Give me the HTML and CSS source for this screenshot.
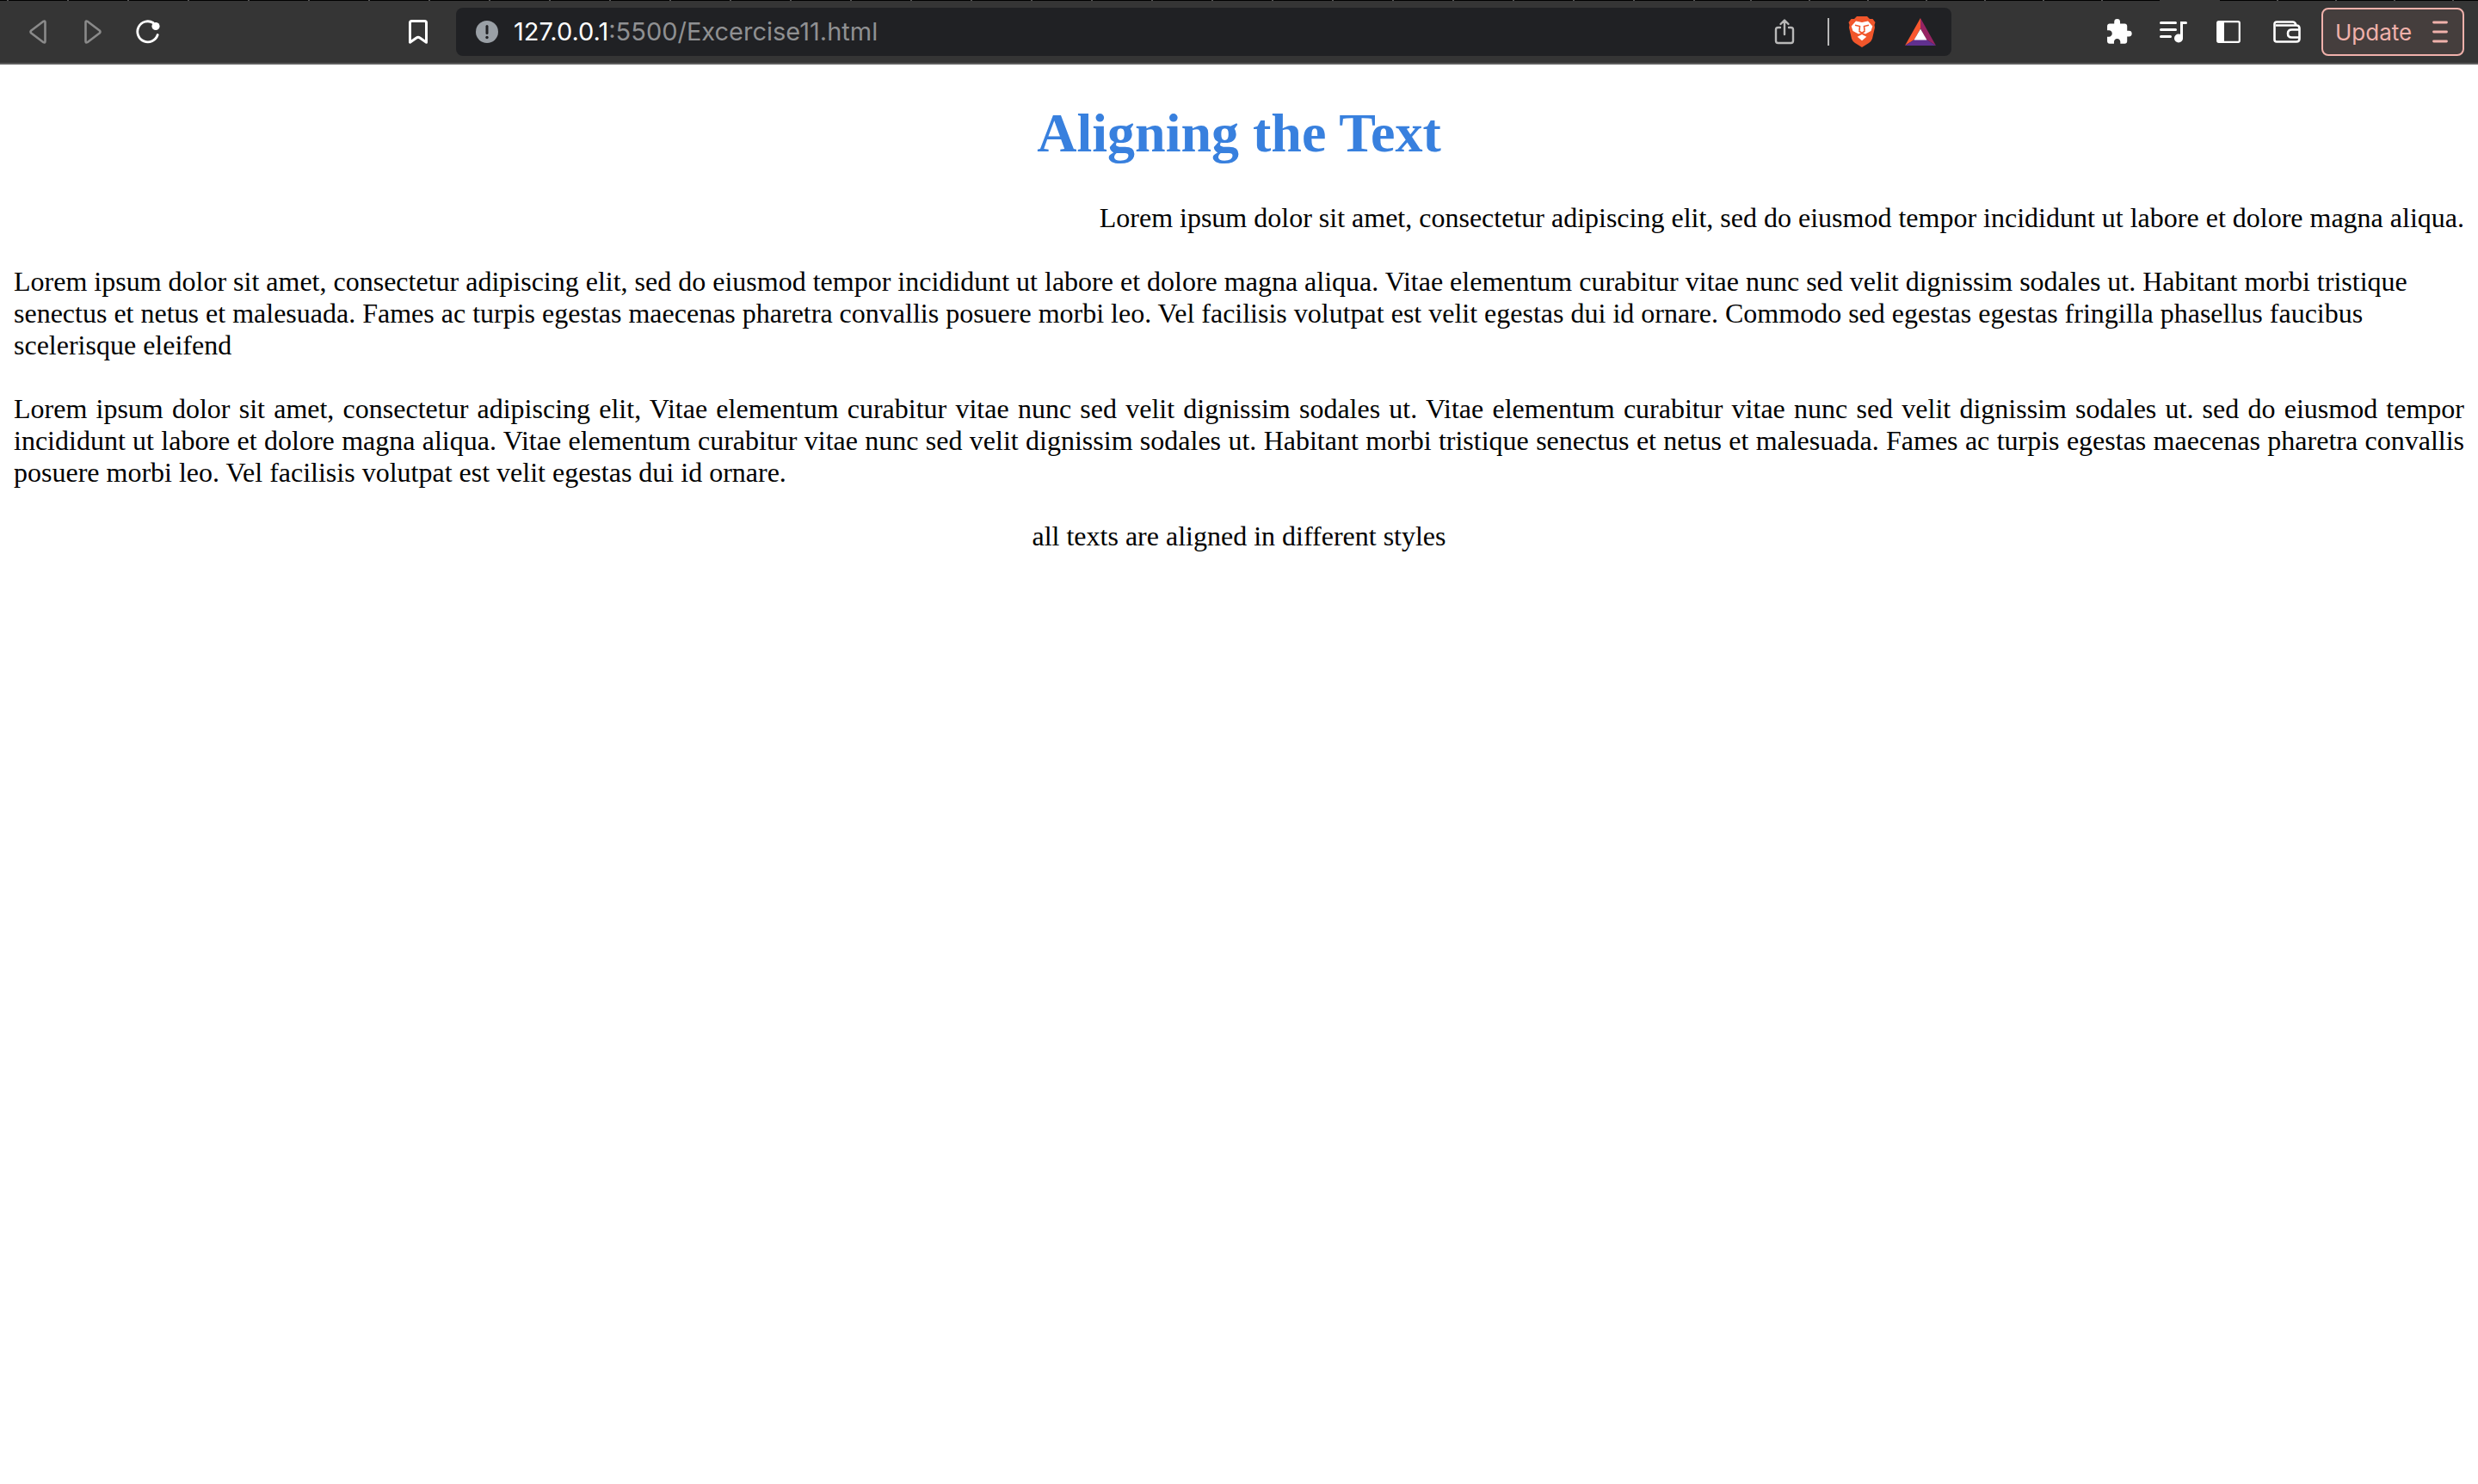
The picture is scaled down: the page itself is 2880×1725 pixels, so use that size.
FILE: index.html
```html
<!DOCTYPE html>
<html lang="en">
<head>
<meta charset="utf-8">
<title>Aligning the Text</title>
<link rel="stylesheet" href="styles.css">
</head>
<body>
<div class="tabstrip"><span class="tabs wide"></span><span class="tabs near"></span><span class="active"></span><span class="tabs rest"></span></div>
<header class="toolbar">
  <nav class="nav" aria-label="Navigation">
    <button class="icon-btn dim" aria-label="Back"><svg width="28" height="28" viewBox="-4 0 28 28"><path d="M16.500 1.800Q18.500.8 18.500 3V25Q18.500 27.200 16.500 26.200L2.300 15.500Q.8 14 2.300 12.500Z" fill="none" stroke="currentColor" stroke-width="2.600" stroke-linejoin="round"/></svg></button>
    <button class="icon-btn dim" aria-label="Forward"><svg width="28" height="28" viewBox="-4 0 28 28"><path d="M3.500 1.800Q1.500.8 1.500 3V25Q1.500 27.200 3.500 26.200L17.700 15.500Q19.200 14 17.700 12.500Z" fill="none" stroke="currentColor" stroke-width="2.600" stroke-linejoin="round"/></svg></button>
    <button class="icon-btn" aria-label="Reload"><svg width="28" height="28" viewBox="0 0 28 28"><path d="M20 3.500A12 12 0 1 0 25.200 17.500" fill="none" stroke="currentColor" stroke-width="2.800" stroke-linecap="round"/><circle cx="23" cy="7.500" r="4.600" fill="currentColor"/></svg></button>
  </nav>
  <button class="icon-btn bookmark" aria-label="Bookmark"><svg width="22" height="28" viewBox="0 0 22 28"><path d="M3.500 1.500H18.500Q20.500 1.500 20.500 3.500V26.200L13 21Q11 19.500 9 21L1.500 26.200V3.500Q1.500 1.500 3.500 1.500Z" fill="none" stroke="currentColor" stroke-width="3" stroke-linejoin="round"/></svg></button>
  <div class="address">
    <svg class="info" width="26" height="28" viewBox="0 0 26 28"><circle cx="13" cy="14" r="13" fill="#9aa0a6"/><path d="M13 7.500V15.500" stroke="#202124" stroke-width="3" stroke-linecap="round"/><circle cx="13" cy="20.500" r="1.700" fill="#202124"/></svg>
    <div class="url"><span class="host">127.0.0.1</span>:5500/Excercise11.html</div>
    <button class="icon-btn share" aria-label="Share"><svg width="24" height="32" viewBox="0 0 24 32"><path d="M7 11H4.500Q2 11 2 13.500V26.500Q2 29 4.500 29H19.500Q22 29 22 26.500V13.500Q22 11 19.500 11H17M12 19V3M7.500 7L12 2.500L16.500 7" fill="none" stroke="currentColor" stroke-width="2.400" stroke-linecap="round" stroke-linejoin="round"/></svg></button>
    <span class="divider"></span>
    <button class="icon-btn brave" aria-label="Brave Shields"><svg width="32" height="36" viewBox="0 0 32 36"><path d="M10 0H22L25 3L28.500 3L31.500 7L30.500 10L31 13L28 26Q27 29 24 31L16 36L8 31Q5 29 4 26L1 13L1.500 10L.5 7L3.500 3L7 3Z" fill="#f1562b"/><path d="M9 5.500L16 7L23 5.500L28.300 11.500L26.500 17L20 20.500L16 18.800L12 20.500L5.500 17L3.700 11.500Z" fill="#fff"/><path d="M10.700 23.800L16 21L21.300 23.800L16 28.200Z" fill="#fff"/><path d="M8 10.200L13.500 11.500L13 16.500M24 10.200L18.500 11.500L19 16.500M12.500 17L16 19.500L19.500 17" fill="none" stroke="#f1562b" stroke-width="1.600"/></svg></button>
    <button class="icon-btn" aria-label="Brave Rewards"><svg width="38" height="32" viewBox="0 0 38 32"><path d="M19 0L1 32L12 25L19 12Z" fill="#f9572f"/><path d="M19 0L37 32L26 25L19 12Z" fill="#972463"/><path d="M1 32H37L26 25H12Z" fill="#60308f"/><path d="M19 12.500L11.500 25.500H26.500Z" fill="#fff"/></svg></button>
  </div>
  <div class="tools">
    <button class="icon-btn" aria-label="Extensions"><svg width="32" height="30" viewBox="0 1 23 22"><path d="M20.500 11H19V7c0-1.100-.9-2-2-2h-4V3.500a2.500 2.500 0 0 0-5 0V5H4c-1.100 0-1.990.9-1.990 2v3.800H3.500c1.490 0 2.700 1.210 2.700 2.700s-1.210 2.700-2.700 2.700H2V20c0 1.100.9 2 2 2h3.800v-1.500c0-1.490 1.210-2.700 2.700-2.700s2.700 1.210 2.700 2.700V22H17c1.100 0 2-.9 2-2v-4h1.500a2.500 2.500 0 0 0 0-5z" fill="currentColor"/></svg></button>
    <button class="icon-btn" aria-label="Media control"><svg width="32" height="26" viewBox="0 0 32 26"><path d="M1.500 2.500H18.500M1.500 10.500H18.500M1.500 18.500H12.500M25.500 20V2.500H30.500" fill="none" stroke="currentColor" stroke-width="3" stroke-linecap="round"/><circle cx="22" cy="20.500" r="5" fill="currentColor"/></svg></button>
    <button class="icon-btn" aria-label="Side panel"><svg width="32" height="26" viewBox="-2 0 32 26"><rect x="1.200" y="1.200" width="25.600" height="23.600" rx="1.500" fill="none" stroke="currentColor" stroke-width="2.200"/><path d="M1 1H9V25H1Z" fill="currentColor"/></svg></button>
    <button class="icon-btn wallet" aria-label="Wallet"><svg width="32" height="26" viewBox="0 0 32 26"><path d="M27 6L25.500 3Q24.500 1.500 23 1.500H4Q1.500 1.500 1.500 4V22Q1.500 24.500 4 24.500H27Q30.500 24.500 30.500 21V9Q30.500 5.500 27 5.500H3M30 10.500H21.500Q17 10.500 17 15Q17 19.500 21.500 19.500H30" fill="none" stroke="currentColor" stroke-width="2.600"/></svg></button>
    <button class="update">Update<svg width="18" height="26" viewBox="0 0 18 26"><path d="M1.500 2H16.500M1.500 13H16.500M1.500 24H16.500" stroke="currentColor" stroke-width="2.800" stroke-linecap="round"/></svg></button>
  </div>
</header>
<main class="page">
  <h1 class="title">Aligning the Text</h1>
  <p class="text right">Lorem ipsum dolor sit amet, consectetur adipiscing elit, sed do eiusmod tempor incididunt ut labore et dolore magna aliqua.</p>
  <p class="text left">Lorem ipsum dolor sit amet, consectetur adipiscing elit, sed do eiusmod tempor incididunt ut labore et dolore magna aliqua. Vitae elementum curabitur vitae nunc sed velit dignissim sodales ut. Habitant morbi tristique senectus et netus et malesuada. Fames ac turpis egestas maecenas pharetra convallis posuere morbi leo. Vel facilisis volutpat est velit egestas dui id ornare. Commodo sed egestas egestas fringilla phasellus faucibus scelerisque eleifend</p>
  <p class="text justify">Lorem ipsum dolor sit amet, consectetur adipiscing elit, Vitae elementum curabitur vitae nunc sed velit dignissim sodales ut. Vitae elementum curabitur vitae nunc sed velit dignissim sodales ut. sed do eiusmod tempor incididunt ut labore et dolore magna aliqua. Vitae elementum curabitur vitae nunc sed velit dignissim sodales ut. Habitant morbi tristique senectus et netus et malesuada. Fames ac turpis egestas maecenas pharetra convallis posuere morbi leo. Vel facilisis volutpat est velit egestas dui id ornare.</p>
  <p class="text center">all texts are aligned in different styles</p>
</main>
</body>
</html>
```
FILE: styles.css
```css
* {
  box-sizing: border-box;
}

body {
  margin: 0;
  background: #fff;
  color: #000;
  font-family: "Liberation Serif", serif;
}

/* bottom edge of the tab strip, with tab separators */
.tabstrip {
  display: flex;
  height: 1px;
  background: #000;
}

.tabs {
  background-image: linear-gradient(to right, #555 2px, #000 2px);
  background-size: 68px 1px;
}

.wide {
  flex: 1;
  background-position: 8px 0;
  background-size: 70px 1px;
}

.near {
  width: 540px;
  background-position: 64px 0;
}

.active {
  width: 70px;
  background: #353535;
}

.rest {
  width: 300px;
  background-position: 66px 0;
}

.toolbar {
  display: flex;
  align-items: center;
  height: 74px;
  padding: 0 16px 0 30px;
  border-bottom: 2px solid #5c5c5c;
  background: #353535;
  color: #fff;
  font-family: Inter, sans-serif;
}

.icon-btn {
  display: flex;
  flex: none;
  padding: 0;
  border: 0;
  background: none;
  color: inherit;
}

.dim {
  color: #8a8a8a;
}

.nav {
  display: flex;
  gap: 36px;
  width: 445px;
}

.bookmark {
  margin-right: 33px;
}

.address {
  display: flex;
  flex: 1;
  align-items: center;
  height: 56px;
  padding: 0 17px 0 23px;
  border-radius: 8px;
  background: #202124;
}

.url {
  flex: 1;
  margin-left: 18px;
  color: #8f9092;
  font-size: 29px;
  line-height: 36px;
}

.host {
  color: #fff;
}

.share {
  color: #b8b8b8;
}

.divider {
  width: 2px;
  height: 32px;
  margin: 0 22px 0 38px;
  background: #b8b8b8;
}

.brave {
  margin-right: 33px;
}

.tools {
  display: flex;
  align-items: center;
  gap: 32px;
  margin-left: 178px;
}

.wallet {
  margin-left: 4px;
}

.update {
  display: flex;
  align-items: center;
  justify-content: space-between;
  width: 166px;
  height: 56px;
  margin-left: -8px;
  padding: 0 17px 0 14px;
  border: 2px solid #f0b1ab;
  border-radius: 8px;
  background: #453e3d;
  color: #f0b1ab;
  font-family: inherit;
  font-size: 26px;
}

.page {
  padding: 43px 16px;
}

.title {
  margin: 0 0 43px;
  color: #3880de;
  font-size: 64px;
  line-height: 74px;
  text-align: center;
}

.text {
  margin: 0 0 37px;
  font-size: 32px;
  line-height: 37px;
}

.right {
  text-align: right;
}

.left {
  text-align: left;
}

.justify {
  text-align: justify;
}

.center {
  text-align: center;
}
```
